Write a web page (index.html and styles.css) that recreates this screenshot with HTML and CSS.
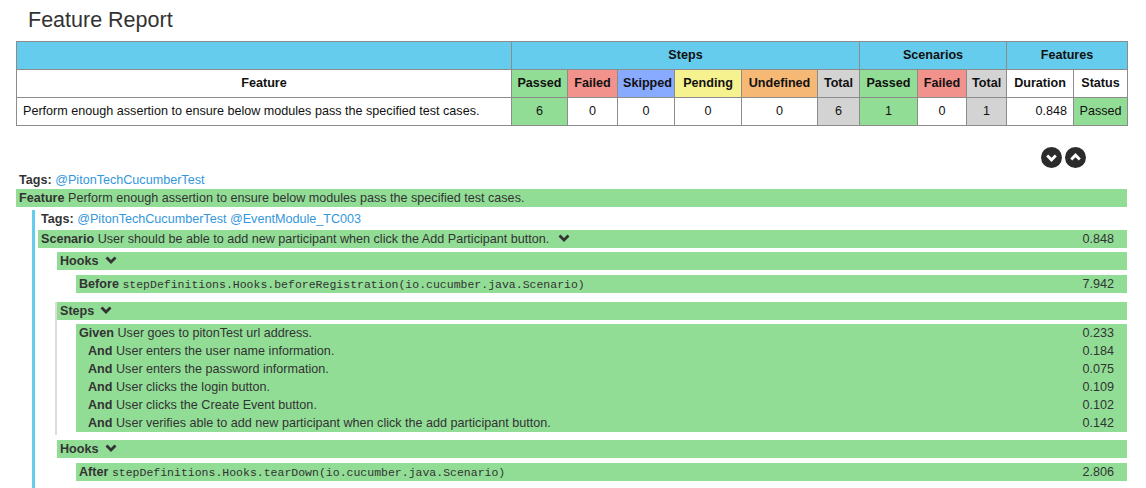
FILE: index.html
```html
<!DOCTYPE html>
<html>
<head>
<meta charset="utf-8">
<title>Feature Report</title>
<link rel="stylesheet" href="styles.css">
</head>
<body>
<div class="page">
  <h2 class="title">Feature Report</h2>
  <table class="stats">
    <colgroup>
      <col class="c-feature"><col class="c-passed"><col class="c-failed"><col class="c-skipped"><col class="c-pending"><col class="c-undefined"><col class="c-total">
      <col class="c-spassed"><col class="c-sfailed"><col class="c-stotal"><col class="c-duration"><col class="c-status">
    </colgroup>
    <thead>
      <tr class="group-row">
        <th></th>
        <th colspan="6">Steps</th>
        <th colspan="3">Scenarios</th>
        <th colspan="2">Features</th>
      </tr>
      <tr class="head-row">
        <th>Feature</th>
        <th class="passed">Passed</th>
        <th class="failed">Failed</th>
        <th class="skipped">Skipped</th>
        <th class="pending">Pending</th>
        <th class="undefined">Undefined</th>
        <th class="total">Total</th>
        <th class="passed">Passed</th>
        <th class="failed">Failed</th>
        <th class="total">Total</th>
        <th>Duration</th>
        <th>Status</th>
      </tr>
    </thead>
    <tbody>
      <tr>
        <td class="name">Perform enough assertion to ensure below modules pass the specified test cases.</td>
        <td class="passed">6</td>
        <td>0</td>
        <td>0</td>
        <td>0</td>
        <td>0</td>
        <td class="total">6</td>
        <td class="passed">1</td>
        <td>0</td>
        <td class="total">1</td>
        <td class="num">0.848</td>
        <td class="passed">Passed</td>
      </tr>
    </tbody>
  </table>

  <div class="toggles">
    <span class="circle" title="Expand all">
      <svg width="21" height="21" viewBox="0 0 22 22"><circle cx="11" cy="11" r="11" fill="#2b2b2b"/><polyline points="6.5,9 11,13.5 15.5,9" fill="none" stroke="#fff" stroke-width="3"/></svg>
    </span>
    <span class="circle" title="Collapse all">
      <svg width="21" height="21" viewBox="0 0 22 22"><circle cx="11" cy="11" r="11" fill="#2b2b2b"/><polyline points="6.5,13 11,8.5 15.5,13" fill="none" stroke="#fff" stroke-width="3"/></svg>
    </span>
  </div>

  <div class="tags"><b>Tags:</b> <a class="tag">@PitonTechCucumberTest</a></div>
  <div class="bar feature-bar"><b>Feature</b> Perform enough assertion to ensure below modules pass the specified test cases.</div>

  <div class="scenario">
    <div class="tags"><b>Tags:</b> <a class="tag">@PitonTechCucumberTest</a> <a class="tag">@EventModule_TC003</a></div>
    <div class="bar row scenario-bar">
      <span><b>Scenario</b> User should be able to add new participant when click the Add Participant button.<svg class="chev" width="12" height="8" viewBox="0 0 12 8"><polyline points="1.5,1.5 6,6 10.5,1.5" fill="none" stroke="#333" stroke-width="2.8"/></svg></span>
      <span class="dur">0.848</span>
    </div>

    <div class="section hooks first-hooks">
      <div class="bar sect-title"><b>Hooks</b><svg class="chev" width="12" height="8" viewBox="0 0 12 8"><polyline points="1.5,1.5 6,6 10.5,1.5" fill="none" stroke="#333" stroke-width="2.8"/></svg></div>
      <div class="bar row inner"><span><b>Before</b> <code>stepDefinitions.Hooks.beforeRegistration(io.cucumber.java.Scenario)</code></span><span class="dur">7.942</span></div>
    </div>

    <div class="section steps">
      <div class="bar sect-title"><b>Steps</b><svg class="chev" width="12" height="8" viewBox="0 0 12 8"><polyline points="1.5,1.5 6,6 10.5,1.5" fill="none" stroke="#333" stroke-width="2.8"/></svg></div>
      <div class="bar inner steps-list">
        <div class="row step"><span><b>Given</b> User goes to pitonTest url address.</span><span class="dur">0.233</span></div>
        <div class="row step and"><span><b>And</b> User enters the user name information.</span><span class="dur">0.184</span></div>
        <div class="row step and"><span><b>And</b> User enters the password information.</span><span class="dur">0.075</span></div>
        <div class="row step and"><span><b>And</b> User clicks the login button.</span><span class="dur">0.109</span></div>
        <div class="row step and"><span><b>And</b> User clicks the Create Event button.</span><span class="dur">0.102</span></div>
        <div class="row step and"><span><b>And</b> User verifies able to add new participant when click the add participant button.</span><span class="dur">0.142</span></div>
      </div>
    </div>

    <div class="section hooks last-hooks">
      <div class="bar sect-title"><b>Hooks</b><svg class="chev" width="12" height="8" viewBox="0 0 12 8"><polyline points="1.5,1.5 6,6 10.5,1.5" fill="none" stroke="#333" stroke-width="2.8"/></svg></div>
      <div class="bar row inner"><span><b>After</b> <code>stepDefinitions.Hooks.tearDown(io.cucumber.java.Scenario)</code></span><span class="dur">2.806</span></div>
    </div>
  </div>
</div>
</body>
</html>
```

FILE: styles.css
```css
* { box-sizing: border-box; }

html, body {
  margin: 0;
  background: #fff;
}

body {
  font-family: "Liberation Sans", Arial, sans-serif;
  font-size: 12.6px;
  color: #333;
}

.page {
  padding: 8px 0 0 16px;
  width: 1127px;
}

.title {
  margin: 0 0 9px 12px;
  font-size: 21.5px;
  font-weight: normal;
  line-height: 24px;
  color: #333;
}

/* ---------- stats table ---------- */
.stats {
  border-collapse: collapse;
  table-layout: fixed;
  width: 1111px;
  color: #111;
}

.stats th,
.stats td {
  border: 1px solid #8c8c8c;
  height: 28px;
  padding: 0 5px 1px;
  text-align: center;
  white-space: nowrap;
  overflow: hidden;
}

.stats th { font-weight: bold; }

.group-row th { background: #66ccee; }
.head-row th { background: #fff; }

.stats .name { text-align: left; padding-left: 6px; }
.stats .num { text-align: right; padding-right: 6px; }

.c-feature { width: 495px; }
.c-passed { width: 56px; }
.c-failed { width: 50px; }
.c-skipped { width: 57px; }
.c-pending { width: 67px; }
.c-undefined { width: 76px; }
.c-total { width: 42px; }
.c-spassed { width: 58px; }
.c-sfailed { width: 49px; }
.c-stotal { width: 40px; }
.c-duration { width: 67px; }
.c-status { width: 54px; }

.stats .passed { background: #92dd96; }
.stats .failed { background: #f2928c; }
.stats .skipped { background: #88aaff; }
.stats .pending { background: #f5f28f; }
.stats .undefined { background: #f5b975; }
.stats .total { background: #d3d3d3; }

/* ---------- toggles ---------- */
.toggles {
  display: flex;
  justify-content: flex-end;
  gap: 3px;
  margin-top: 21px;
  padding-right: 41px;
  height: 21px;
}

.circle { display: block; width: 21px; height: 21px; }
.circle svg { display: block; }

/* ---------- feature details ---------- */
.tags {
  line-height: 18px;
  height: 18px;
  padding-left: 3px;
  white-space: nowrap;
}

.toggles + .tags { margin-top: 3px; }

.tags b { color: #333; }

.tag {
  color: #3497dc;
  text-decoration: none;
}

.bar {
  background: #92dd96;
  line-height: 18px;
  padding: 0 3px;
  white-space: nowrap;
}

.row {
  display: flex;
  justify-content: space-between;
  height: 18px;
}

.sect-title, .feature-bar { height: 18px; }

.dur {
  padding-right: 10px;
}

.chev {
  display: inline-block;
  vertical-align: 1px;
  margin-left: 6px;
}

.scenario-bar .chev { margin-left: 9px; }

.scenario {
  margin-top: 3px;
  margin-left: 16px;
  border-left: 3px solid #66ccee;
  padding-left: 3px;
  padding-bottom: 10px;
}

.scenario-bar { margin-top: 2px; }

.section.hooks { margin-left: 19px; }
.first-hooks { margin-top: 4px; }
.last-hooks { margin-top: 5px; }

.section.steps {
  margin-top: 9px;
  margin-left: 17px;
  border-left: 2px solid #dcdcdc;
  padding-bottom: 3px;
}

.inner { margin-left: 19px; }

.section > .inner { margin-top: 5px; }
.steps > .steps-list { margin-top: 4px; padding: 0; height: auto; }

.step { padding-left: 3px; padding-right: 3px; }
.step.and { padding-left: 12px; }

code {
  font-family: "Liberation Mono", "DejaVu Sans Mono", monospace;
  font-size: 11.5px;
  line-height: 18px;
  color: #333;
}
```
